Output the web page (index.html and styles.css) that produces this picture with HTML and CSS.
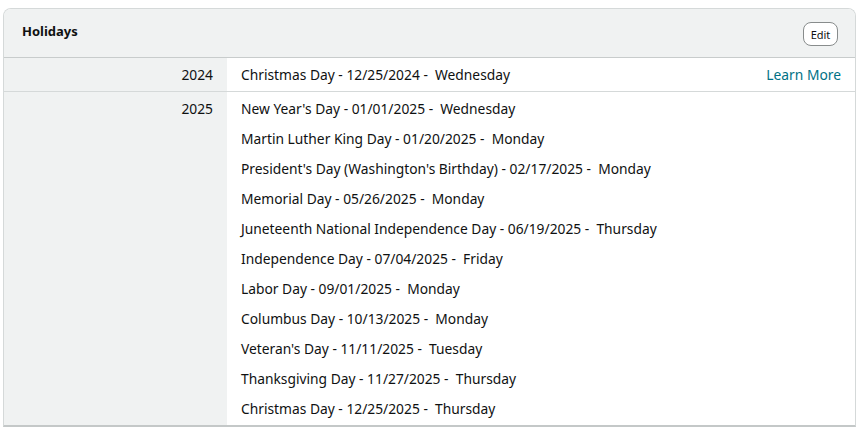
FILE: index.html
```html
<!DOCTYPE html>
<html>
<head>
<meta charset="utf-8">
<link rel="stylesheet" href="styles.css">
</head>
<body>
<div class="card">
  <div class="card-head">
    <span class="title">Holidays</span>
    <button class="edit">Edit</button>
  </div>
  <div class="row row-single">
    <div class="year">2024</div>
    <div class="items">
      <div class="item item-flex"><span>Christmas Day - 12/25/2024 -&nbsp; Wednesday</span><a class="learn">Learn More</a></div>
    </div>
  </div>
  <div class="row row-multi">
    <div class="year">2025</div>
    <div class="items">
      <div class="item">New Year's Day - 01/01/2025 -&nbsp; Wednesday</div>
      <div class="item">Martin Luther King Day - 01/20/2025 -&nbsp; Monday</div>
      <div class="item">President's Day (Washington's Birthday) - 02/17/2025 -&nbsp; Monday</div>
      <div class="item">Memorial Day - 05/26/2025 -&nbsp; Monday</div>
      <div class="item">Juneteenth National Independence Day - 06/19/2025 -&nbsp; Thursday</div>
      <div class="item">Independence Day - 07/04/2025 -&nbsp; Friday</div>
      <div class="item">Labor Day - 09/01/2025 -&nbsp; Monday</div>
      <div class="item">Columbus Day - 10/13/2025 -&nbsp; Monday</div>
      <div class="item">Veteran's Day - 11/11/2025 -&nbsp; Tuesday</div>
      <div class="item">Thanksgiving Day - 11/27/2025 -&nbsp; Thursday</div>
      <div class="item">Christmas Day - 12/25/2025 -&nbsp; Thursday</div>
    </div>
  </div>
</div>
</body>
</html>
```
FILE: styles.css
```css
* { box-sizing: border-box; }
body {
  margin: 0;
  padding: 8px 10px 0 3px;
  background: #fff;
  font-family: "Noto Sans", "Open Sans", sans-serif;
  color: #0f1111;
  font-size: 13.8px;
}
.card {
  width: 853px;
  border: 1px solid #d5d9d9;
  border-bottom: 2px solid #c4c8c8;
  border-radius: 8px 8px 0 0;
  overflow: hidden;
  background: #fff;
}
.card-head {
  height: 49px;
  background: #f0f2f2;
  border-bottom: 1px solid #c8cccc;
  display: flex;
  align-items: center;
  justify-content: space-between;
  padding: 0 18px 0 18px;
}
.title {
  font-weight: 700;
  font-size: 13px;
  position: relative;
  top: -2px;
}
.edit {
  font-family: inherit;
  font-size: 11px;
  color: #0f1111;
  background: #fff;
  border: 1px solid #888c8c;
  border-radius: 8px;
  height: 24px;
  width: 35px;
  padding: 0;
  position: relative;
  top: 1px;
  left: 1px;
}
.row {
  display: flex;
}
.row-single {
  border-bottom: 1px solid #d5d9d9;
}
.year {
  width: 223px;
  flex: none;
  background: #f0f2f2;
  text-align: right;
  padding-right: 14px;
  line-height: 20px;
}
.row-single .year { padding-top: 7px; }
.row-multi .year { padding-top: 7px; }
.items {
  flex: 1;
  padding: 0 14px;
}
.row-single .items { padding-top: 7px; padding-bottom: 6px; }
.row-multi .items { padding-top: 2px; padding-bottom: 1px; }
.item {
  line-height: 20px;
}
.row-multi .item { padding: 5px 0; }
.item-flex {
  display: flex;
  justify-content: space-between;
}
.learn {
  color: #007185;
  cursor: pointer;
}
```
